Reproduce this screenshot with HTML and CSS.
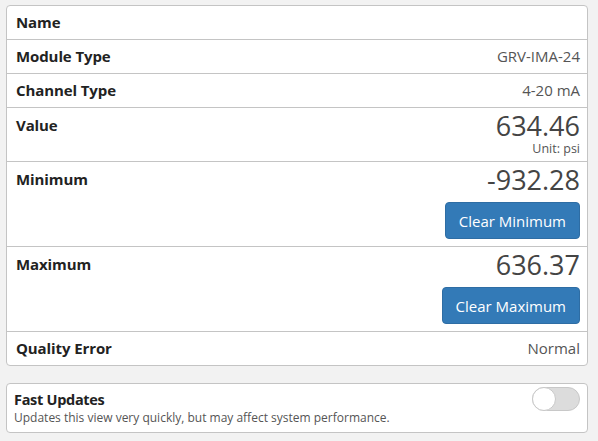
FILE: index.html
```html
<!DOCTYPE html>
<html lang="en">
<head>
  <meta charset="UTF-8" />
  <title>Channel Details</title>
  <link rel="stylesheet" href="styles.css">
</head>
<body>
  <!-- channel details -->
  <div class="panel">
    <div class="row">
      <span class="label">Name</span>
    </div>
    <div class="row">
      <span class="label">Module Type</span>
      <span class="val">GRV-IMA-24</span>
    </div>
    <div class="row">
      <span class="label">Channel Type</span>
      <span class="val">4-20 mA</span>
    </div>
    <div class="row row-big row-value">
      <span class="label">Value</span>
      <div class="right">
        <div class="big">634.46</div>
        <div class="unit">Unit: psi</div>
      </div>
    </div>
    <div class="row row-big">
      <span class="label">Minimum</span>
      <div class="right">
        <div class="big">-932.28</div>
        <button class="btn">Clear Minimum</button>
      </div>
    </div>
    <div class="row row-big">
      <span class="label">Maximum</span>
      <div class="right">
        <div class="big">636.37</div>
        <button class="btn">Clear Maximum</button>
      </div>
    </div>
    <div class="row">
      <span class="label">Quality Error</span>
      <span class="val">Normal</span>
    </div>
  </div>

  <!-- fast updates -->
  <div class="panel fast">
    <div class="fast-text">
      <div class="fast-title">Fast Updates</div>
      <div class="fast-desc">Updates this view very quickly, but may affect system performance.</div>
    </div>
    <span class="toggle"><span class="knob"></span></span>
  </div>
</body>
</html>
```

FILE: styles.css
```css
body {
  font-family: "Open Sans", sans-serif;
  background-color: #f2f2f2;
  margin: 0;
  padding: 5px 10px 0 6px;
  color: #222;
}

.panel {
  background-color: #ffffff;
  border: 1px solid #c4c4c4;
  border-radius: 4px;
}

.row {
  display: flex;
  justify-content: space-between;
  align-items: flex-start;
  padding: 8px 7px 8px 9px;
  min-height: 17px;
  border-top: 1px solid #c4c4c4;
}

.row:first-child {
  border-top: none;
}

.label {
  font-weight: bold;
  font-size: 15px;
  line-height: 17px;
  letter-spacing: -0.1px;
}

.val {
  font-size: 15px;
  line-height: 17px;
  color: #555;
}

.row-big {
  padding-top: 4px;
  padding-bottom: 7px;
}

.row-value {
  padding-bottom: 5px;
}

.row-big .label {
  padding-top: 5px;
}

.right {
  display: flex;
  flex-direction: column;
  align-items: flex-end;
}

.big {
  font-size: 27px;
  line-height: 28px;
  color: #444;
}

.unit {
  margin-top: 2px;
  font-size: 12.5px;
  line-height: 14px;
  color: #555;
}

.btn {
  margin-top: 8px;
  background-color: #337ab7;
  color: white;
  border: 1px solid #2e6da4;
  border-radius: 4px;
  font-family: inherit;
  font-size: 15px;
  padding: 0 13px;
  height: 37px;
}

.fast {
  margin-top: 17px;
  display: flex;
  justify-content: space-between;
  align-items: flex-start;
  padding: 3px 7px 5px 7px;
}

.fast-title {
  font-weight: bold;
  font-size: 14.5px;
  line-height: 18px;
  margin-top: 4px;
  letter-spacing: -0.3px;
}

.fast-desc {
  font-size: 12px;
  line-height: 18px;
  color: #555;
}

.toggle {
  position: relative;
  display: inline-block;
  width: 48px;
  height: 24px;
  border-radius: 12px;
  background-color: #dcdcdc;
  border: 1px solid #c8c8c8;
  box-sizing: border-box;
}

.knob {
  position: absolute;
  left: -1px;
  top: -1px;
  width: 24px;
  height: 24px;
  border-radius: 50%;
  background: #fff;
  border: 1px solid #c8c8c8;
  box-sizing: border-box;
}
```
